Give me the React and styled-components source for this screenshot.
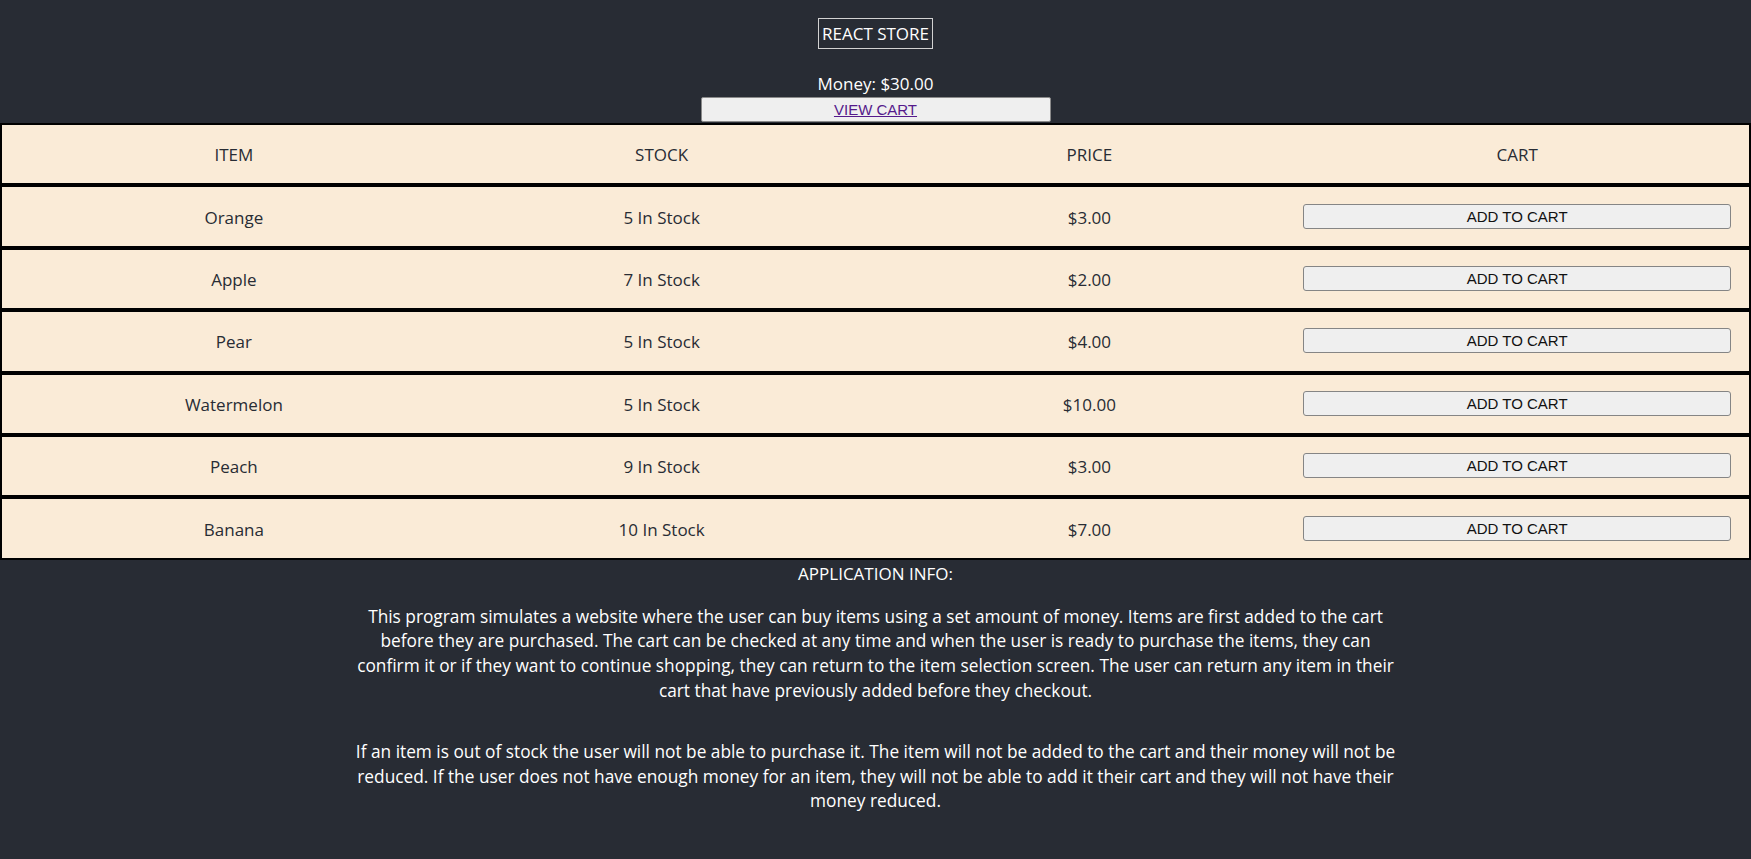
import React from 'react';
import styled, { createGlobalStyle } from 'styled-components';

const items = [
  { name: 'Orange', stock: 5, price: 3 },
  { name: 'Apple', stock: 7, price: 2 },
  { name: 'Pear', stock: 5, price: 4 },
  { name: 'Watermelon', stock: 5, price: 10 },
  { name: 'Peach', stock: 9, price: 3 },
  { name: 'Banana', stock: 10, price: 7 },
];

function App() {
  return (
    <Page>
      <GlobalStyle />
      <Header>
        <Title>REACT STORE</Title>
        <Money>Money: $30.00</Money>
        <ViewCartButton>
          <CartLink href="#cart">VIEW CART</CartLink>
        </ViewCartButton>
      </Header>

      <Table>
        <Row>
          <Cell>ITEM</Cell>
          <Cell>STOCK</Cell>
          <Cell>PRICE</Cell>
          <Cell>CART</Cell>
        </Row>
        {items.map((item) => (
          <Row key={item.name}>
            <Cell>{item.name}</Cell>
            <Cell>{item.stock} In Stock</Cell>
            <Cell>${item.price.toFixed(2)}</Cell>
            <Cell>
              <AddButton>ADD TO CART</AddButton>
            </Cell>
          </Row>
        ))}
      </Table>

      <Info>
        <InfoTitle>APPLICATION INFO:</InfoTitle>
        <Paragraph>
          This program simulates a website where the user can buy items using a
          set amount of money. Items are first added to the cart before they are
          purchased. The cart can be checked at any time and when the user is
          ready to purchase the items, they can confirm it or if they want to
          continue shopping, they can return to the item selection screen. The
          user can return any item in their cart that have previously added
          before they checkout.
        </Paragraph>
        <Paragraph $gap>
          If an item is out of stock the user will not be able to purchase it.
          The item will not be added to the cart and their money will not be
          reduced. If the user does not have enough money for an item, they will
          not be able to add it their cart and they will not have their money
          reduced.
        </Paragraph>
      </Info>
    </Page>
  );
}

export default App;

const GlobalStyle = createGlobalStyle`
  body {
    margin: 0;
    background-color: #282c34;
    font-family: "Open Sans", "Noto Sans", sans-serif;
  }
`;

const Page = styled.div`
  min-height: 100vh;
  text-align: center;
  color: #ffffff;
`;

const Header = styled.header`
  display: flex;
  flex-direction: column;
  align-items: center;
  padding-top: 18px;
`;

const Title = styled.h1`
  margin: 0;
  padding: 2px 3px;
  border: 1px solid #d2d2d2;
  font-size: 17px;
  font-weight: 400;
  line-height: 25px;
`;

const Money = styled.p`
  margin: 23px 0 0;
  font-size: 17px;
  line-height: 24px;
`;

const ViewCartButton = styled.button`
  width: 350px;
  height: 25px;
  margin-top: 1px;
  padding: 0;
  background-color: #efefef;
  border: 1px solid #8a8a8a;
  border-radius: 2px;
  font-family: "Liberation Sans", Arial, sans-serif;
  font-size: 15px;
`;

const CartLink = styled.a`
  color: #551a8b;
  text-decoration: underline;
`;

const Table = styled.div`
  margin-top: 1px;
  display: flex;
  flex-direction: column;
`;

const Row = styled.div`
  display: grid;
  grid-template-columns: repeat(4, 1fr);
  align-items: center;
  height: 57.4px;
  padding: 1px 18px 0;
  background-color: #faebd7;
  border: 2px solid #000000;
  color: #282c34;
  font-size: 17px;
`;

const Cell = styled.div`
  display: flex;
  justify-content: center;
  align-items: center;
`;

const AddButton = styled.button`
  width: 100%;
  height: 25px;
  margin-top: -2px;
  padding: 0;
  background-color: #efefef;
  border: 1px solid #858585;
  border-radius: 3px;
  color: #111111;
  font-family: "Liberation Sans", Arial, sans-serif;
  font-size: 15px;
`;

const Info = styled.section`
  width: 60%;
  margin: 0 auto;
  padding-top: 2px;
`;

const InfoTitle = styled.h3`
  margin: 0;
  font-size: 17px;
  font-weight: 400;
  line-height: 24px;
`;

const Paragraph = styled.p`
  margin: ${(p) => (p.$gap ? '37px' : '19px')} 0 0;
  font-size: 17.3px;
  line-height: 24.6px;
`;
